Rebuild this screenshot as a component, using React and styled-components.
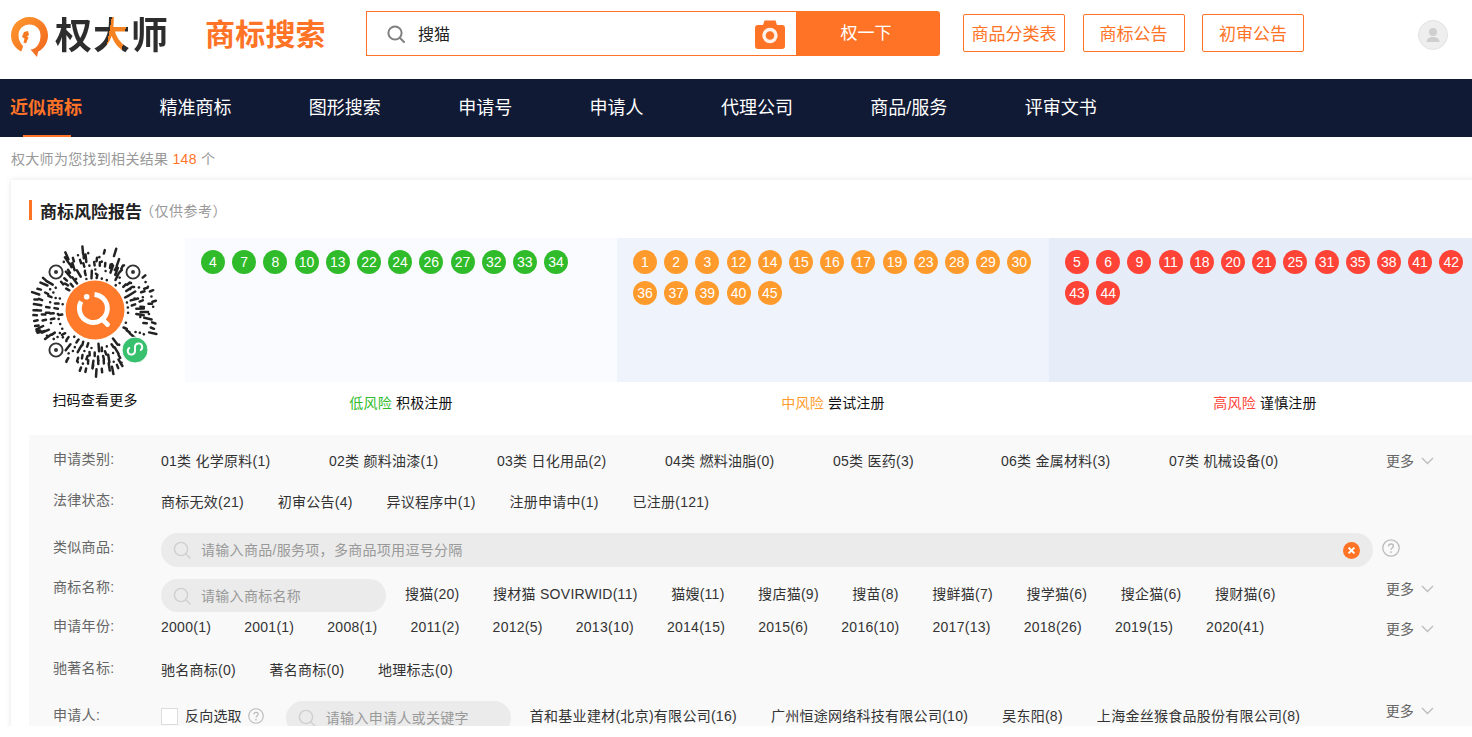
import React from "react";
import styled, { createGlobalStyle } from "styled-components";

const FONT = `"Liberation Sans", Arial, "Noto Sans CJK SC", sans-serif`;
const ORANGE = "#ff7326";

const Global = createGlobalStyle`
  html, body { margin: 0; padding: 0; background: #fff; overflow: hidden; }
  body { font-family: ${FONT}; }
  * { box-sizing: border-box; }
`;

const Page = styled.div`
  width: 1472px;
  height: 726px;
  overflow: hidden;
  background: #fff;
`;
const Header = styled.header`
  height: 79px;
  display: flex;
  align-items: flex-start;
`;
const Logo = styled.div`
  display: flex;
  align-items: center;
  width: 205px;
  height: 70px;
  padding: 3px 0 0 11px;
  gap: 7px;
`;
const LogoText = styled.span`
  font-size: 37px;
  font-weight: 700;
  letter-spacing: 1px;
  line-height: 40px;
  background: linear-gradient(100deg, #2d2d2d 0 47%, #f5821f 47% 60%, #2d2d2d 60%);
  -webkit-background-clip: text;
  background-clip: text;
  color: transparent;
`;
const Slogan = styled.h1`
  margin: 0;
  width: 161px;
  height: 70px;
  line-height: 70px;
  font-size: 30px;
  letter-spacing: 0.2px;
  font-weight: 700;
  color: ${ORANGE};
`;
const SearchBox = styled.div`
  margin-top: 11px;
  width: 430px;
  height: 45px;
  border: 1px solid ${ORANGE};
  border-right: 0;
  display: flex;
  align-items: center;
  padding-left: 20px;
`;
const SearchText = styled.span`
  margin-left: 13px;
  padding-bottom: 1px;
  flex: 1;
  font-size: 16px;
  color: #222;
`;
const CameraSlot = styled.span`
  display: flex;
  margin-right: 11px;
`;
const SearchButton = styled.button`
  margin-top: 11px;
  width: 144px;
  height: 45px;
  border: 0;
  border-radius: 0 3px 3px 0;
  background: ${ORANGE};
  color: #fff;
  font: 17px ${FONT};
  padding: 0 4px 4px 0;
`;
const LinkGroup = styled.div`
  margin: 14px 0 0 23px;
  display: flex;
  gap: 17.5px;
`;
const LinkButton = styled.a`
  width: 102px;
  height: 38px;
  padding-bottom: 2px;
  border: 1px solid ${ORANGE};
  border-radius: 2px;
  color: ${ORANGE};
  font-size: 17px;
  display: flex;
  align-items: center;
  justify-content: center;
`;
const Avatar = styled.div`
  margin: 20px 0 0 114px;
  width: 30px;
  height: 30px;
  border-radius: 50%;
  background: #eeeeee;
  border: 1px solid #e2e2e2;
  display: flex;
  align-items: center;
  justify-content: center;
`;

const Nav = styled.nav`
  height: 58px;
  background: #111a35;
  display: flex;
  gap: 77.4px;
  padding-left: 10px;
`;
const NavItem = styled.a`
  position: relative;
  font-size: 18px;
  line-height: 58px;
  color: ${(p) => (p.$active ? ORANGE : "#fff")};
  font-weight: ${(p) => (p.$active ? 700 : 400)};
  &::after {
    content: "";
    display: ${(p) => (p.$active ? "block" : "none")};
    position: absolute;
    left: 13px;
    right: 11px;
    bottom: 0;
    height: 2px;
    background: ${ORANGE};
  }
`;
const ResultLine = styled.div`
  height: 43px;
  padding: 13px 0 0 11px;
  font-size: 14px;
  letter-spacing: 0.3px;
  line-height: 18px;
  color: #999;
`;
const Count = styled.span`
  color: ${ORANGE};
`;

const Card = styled.section`
  margin-left: 11px;
  width: 1490px;
  height: 560px;
  padding: 20px 0 0 18px;
  background: #fff;
  box-shadow: 0 0 6px rgba(0, 0, 0, 0.1);
`;
const TitleRow = styled.div`
  height: 20px;
  display: flex;
  align-items: center;
  border-left: 3px solid ${ORANGE};
  padding-left: 8px;
  margin-bottom: 18px;
`;
const Title = styled.h2`
  margin: 0;
  font-size: 17px;
  font-weight: 700;
  color: #222;
`;
const TitleNote = styled.span`
  font-size: 14px;
  letter-spacing: 0.5px;
  color: #999;
  margin-left: -2px;
`;

const Report = styled.div`
  display: flex;
`;
const QrColumn = styled.div`
  width: 156px;
  display: flex;
  flex-direction: column;
`;
const QrFigure = styled.svg`
  margin: 3px 0 0 -4px;
`;
const QrCaption = styled.div`
  margin-top: 9px;
  width: 132px;
  text-align: center;
  font-size: 14px;
  letter-spacing: 0.2px;
  line-height: 20px;
  color: #111;
`;
const RiskColumn = styled.div`
  width: 432px;
`;
const RiskZone = styled.div`
  height: 144px;
  padding: 12px 0 0 16px;
  background: ${(p) => p.$bg};
  display: flex;
  flex-wrap: wrap;
  align-content: flex-start;
  gap: 7px 7.2px;
`;
const Badge = styled.span`
  width: 24px;
  height: 24px;
  border-radius: 50%;
  background: ${(p) => p.$color};
  color: #fff;
  font-size: 14px;
  line-height: 24px;
  text-align: center;
`;
const RiskCaption = styled.div`
  height: 42px;
  line-height: 42px;
  text-align: center;
  font-size: 14px;
  letter-spacing: 0.2px;
  color: #111;
`;
const RiskWord = styled.span`
  color: ${(p) => p.$color};
`;

const Panel = styled.div`
  margin-top: 11px;
  background: #f9f9f9;
  height: 300px;
`;
const Row = styled.div`
  height: ${(p) => p.$h}px;
  display: flex;
  align-items: flex-start;
  padding-left: 24px;
`;
const Label = styled.div`
  flex: 0 0 108px;
  margin-top: ${(p) => p.$top}px;
  font-size: 14px;
  letter-spacing: 0.3px;
  line-height: 20px;
  color: #666;
`;
const Items = styled.div`
  flex: 0 0 auto;
  width: ${(p) => p.$w || 1225}px;
  margin: ${(p) => p.$top}px 0 0 ${(p) => p.$left || 0}px;
  display: flex;
  gap: ${(p) => p.$gap || 33}px;
  white-space: nowrap;
`;
const GridItems = styled.div`
  flex: 0 0 1225px;
  margin-top: ${(p) => p.$top}px;
  display: grid;
  grid-template-columns: repeat(7, 168px);
  white-space: nowrap;
`;
const Item = styled.a`
  font-size: 14px;
  letter-spacing: 0.27px;
  line-height: 20px;
  color: #333;
`;
const More = styled.a`
  margin-top: ${(p) => p.$top}px;
  display: flex;
  align-items: center;
  gap: 7px;
  font-size: 14px;
  line-height: 20px;
  color: #666;
`;
const Pill = styled.div`
  flex: 0 0 auto;
  width: ${(p) => p.$w}px;
  height: ${(p) => p.$hh || 34}px;
  margin-top: ${(p) => p.$top}px;
  border-radius: 17px;
  background: #ebebeb;
  display: flex;
  align-items: center;
  padding: 0 13px 0 12px;
  font-size: 14px;
  color: #999;
`;
const PillText = styled.span`
  flex: 1;
  margin-left: 10px;
  padding-bottom: 2px;
  letter-spacing: 0.3px;
`;
const HelpSlot = styled.span`
  display: flex;
  margin: ${(p) => p.$m};
`;
const Inline = styled.div`
  flex: 0 0 auto;
  display: flex;
  align-items: flex-start;
`;
const Checkbox = styled.span`
  width: 17px;
  height: 17px;
  margin-top: 17px;
  border: 1px solid #ddd;
  background: #fff;
`;
const CheckLabel = styled.span`
  margin: 15px 0 0 7px;
  font-size: 14px;
  letter-spacing: 0.2px;
  line-height: 20px;
  color: #333;
`;

const SearchIcon = ({ size = 18, color = "#808080", w = 2 }) => (
  <svg width={size} height={size} viewBox="0 0 18 18" fill="none">
    <circle cx="8" cy="8" r="6.6" stroke={color} strokeWidth={w} />
    <path d="M13 13l4 4" stroke={color} strokeWidth={w} strokeLinecap="round" />
  </svg>
);
const Chevron = () => (
  <svg width="13" height="8" viewBox="0 0 13 8" fill="none">
    <path d="M1 1l5.5 5.5L12 1" stroke="#bdbdbd" strokeWidth="1.4" />
  </svg>
);
const Help = ({ size = 18, color = "#bbb" }) => (
  <svg width={size} height={size} viewBox="0 0 18 18" fill="none">
    <circle cx="9" cy="9" r="8.2" stroke={color} strokeWidth="1.3" />
    <path d="M6.6 7.2C6.6 5.8 7.7 5 9 5s2.4.8 2.4 2.1c0 1.8-2.4 1.9-2.4 3.7" stroke={color} strokeWidth="1.4" />
    <circle cx="9" cy="13.1" r=".95" fill={color} />
  </svg>
);
const Clear = () => (
  <svg width="17" height="17" viewBox="0 0 17 17">
    <circle cx="8.5" cy="8.5" r="8.5" fill={ORANGE} />
    <path d="M5.6 5.6l5.8 5.8M11.4 5.6l-5.8 5.8" stroke="#fff" strokeWidth="2" />
  </svg>
);
const Camera = () => (
  <svg width="30" height="30" viewBox="0 0 30 30">
    <path d="M3 6h5l1.5-4.5h11L22 6h5a3 3 0 0 1 3 3v18a3 3 0 0 1-3 3H3a3 3 0 0 1-3-3V9a3 3 0 0 1 3-3z" fill={ORANGE} />
    <circle cx="15" cy="16.5" r="6" fill="none" stroke="#fff" strokeWidth="3.4" opacity=".9" />
  </svg>
);
const LogoMark = () => (
  <svg width="37" height="40" viewBox="0 0 37 40">
    <defs>
      <linearGradient id="lg" x1="0" y1="0" x2="1" y2="1">
        <stop offset="0" stopColor="#ff9a2e" />
        <stop offset="1" stopColor="#f0641e" />
      </linearGradient>
    </defs>
    <path
      fillRule="evenodd"
      d="M18.5 0C28.7 0 37 8.2 37 18.4c0 7-4 13.1-9.8 16.2L26 40l-6.5-7.5 2-.3c4.600-1.3 8-6.9 8-13.8 0-6.8-5-10.9-11-10.9S7.500 11.600 7.500 18.400c0 4.600 2 8 4.700 10.800l-1.900 5.300C4.200 31.500 0 25.400 0 18.400 0 8.200 8.300 0 18.500 0z"
      fill="url(#lg)"
    />
    <path d="M13 15l4-1 1 4-2 1.500 1.500 1-2.500 6-2.500-1 1-4-2.500-1.500z" fill="#f57a22" />
  </svg>
);
const Person = () => (
  <svg width="18" height="18" viewBox="0 0 18 18">
    <circle cx="9" cy="6" r="4" fill="#cfcfcf" />
    <path d="M2.500 16c0-3.500 3-5 6.500-5s6.500 1.500 6.500 5z" fill="#cfcfcf" />
  </svg>
);

function buildQr() {
  let s = 20210;
  const rand = () => {
    s = (s * 16807) % 2147483647;
    return s / 2147483647;
  };
  const cx = 70, cy = 70;
  const finders = [[31, 31], [108, 31], [31, 109]];
  const out = [];
  for (let r = 33; r <= 59; r += 4.2) {
    const count = Math.round((2 * Math.PI * r) / 5.2);
    const start = rand() * 6.28;
    for (let i = 0; i < count; i++) {
      const a = start + (i / count) * 2 * Math.PI;
      const x = cx + r * Math.cos(a);
      const y = cy + r * Math.sin(a);
      if (finders.some(([fx, fy]) => Math.hypot(x - fx, y - fy) < 11)) continue;
      if (Math.hypot(x - 110, y - 109) < 15) continue;
      if (rand() < 0.34) continue;
      const v = rand();
      const len = v < 0.4 ? 0.1 : v < 0.78 ? 3.5 : 7.5;
      const skew = (rand() - 0.5) * 0.4;
      const dx = Math.cos(a + skew) * len;
      const dy = Math.sin(a + skew) * len;
      out.push(`M${x.toFixed(1)} ${y.toFixed(1)}l${dx.toFixed(1)} ${dy.toFixed(1)}`);
    }
  }
  return { d: out.join(""), finders };
}
const QR = buildQr();
const QrCode = () => (
  <QrFigure width="140" height="140" viewBox="0 0 140 140">
    <path d={QR.d} stroke="#222" strokeWidth="2.5" strokeLinecap="round" fill="none" />
    {QR.finders.map(([x, y]) => (
      <g key={x + "-" + y}>
        <circle cx={x} cy={y} r="6.6" fill="none" stroke="#333" strokeWidth="1.9" />
        <circle cx={x} cy={y} r="2" fill="#333" />
      </g>
    ))}
    <circle cx="70" cy="69" r="29.500" fill="#ff7a2a" />
    <path d="M69.500 53.500A14 14 0 1 1 56.200 60.500" fill="none" stroke="#fff" strokeWidth="4.800" />
    <circle cx="61.700" cy="55.700" r="2.800" fill="#fff" />
    <path d="M77 78l5.500 5.500" stroke="#fff" strokeWidth="4.800" strokeLinecap="round" />
    <circle cx="110" cy="109" r="13" fill="#37c06d" stroke="#fff" strokeWidth="1" />
    <path d="M104.900 105.700a3.600 3.600 0 1 0 5.100 3.300v-4a3.600 3.600 0 1 1 5.100 3.300" transform="translate(0 1)" fill="none" stroke="#fff" strokeWidth="1.900" />
  </QrFigure>
);

const NAV = ["近似商标", "精准商标", "图形搜索", "申请号", "申请人", "代理公司", "商品/服务", "评审文书"];
const RISKS = [
  { bg: "#f9fbfe", color: "#2fbb2a", word: "低风险", note: "积极注册", tone: "#2fbb2a",
    nums: [4, 7, 8, 10, 13, 22, 24, 26, 27, 32, 33, 34] },
  { bg: "#eff4fc", color: "#ff9b2c", word: "中风险", note: "尝试注册", tone: "#ff9b2c",
    nums: [1, 2, 3, 12, 14, 15, 16, 17, 19, 23, 28, 29, 30, 36, 37, 39, 40, 45] },
  { bg: "#e6edf8", color: "#ff4336", word: "高风险", note: "谨慎注册", tone: "#ff4336",
    nums: [5, 6, 9, 11, 18, 20, 21, 25, 31, 35, 38, 41, 42, 43, 44] },
];
const CLASSES = ["01类 化学原料(1)", "02类 颜料油漆(1)", "03类 日化用品(2)", "04类 燃料油脂(0)", "05类 医药(3)", "06类 金属材料(3)", "07类 机械设备(0)"];
const STATUS = ["商标无效(21)", "初审公告(4)", "异议程序中(1)", "注册申请中(1)", "已注册(121)"];
const NAMES = ["搜猫(20)", "搜材猫 SOVIRWID(11)", "猫嫂(11)", "搜店猫(9)", "搜苗(8)", "搜鲜猫(7)", "搜学猫(6)", "搜企猫(6)", "搜财猫(6)"];
const YEARS = ["2000(1)", "2001(1)", "2008(1)", "2011(2)", "2012(5)", "2013(10)", "2014(15)", "2015(6)", "2016(10)", "2017(13)", "2018(26)", "2019(15)", "2020(41)"];
const FAME = ["驰名商标(0)", "著名商标(0)", "地理标志(0)"];
const OWNERS = ["首和基业建材(北京)有限公司(16)", "广州恒途网络科技有限公司(10)", "吴东阳(8)", "上海金丝猴食品股份有限公司(8)"];

const MoreLink = ({ top }) => (
  <More $top={top}>
    更多 <Chevron />
  </More>
);
const list = (arr) => arr.map((t) => <Item key={t}>{t}</Item>);

export default function App() {
  return (
    <Page>
      <Global />
      <Header>
        <Logo>
          <LogoMark />
          <LogoText>权大师</LogoText>
        </Logo>
        <Slogan>商标搜索</Slogan>
        <SearchBox>
          <SearchIcon />
          <SearchText>搜猫</SearchText>
          <CameraSlot>
            <Camera />
          </CameraSlot>
        </SearchBox>
        <SearchButton>权一下</SearchButton>
        <LinkGroup>
          <LinkButton>商品分类表</LinkButton>
          <LinkButton>商标公告</LinkButton>
          <LinkButton>初审公告</LinkButton>
        </LinkGroup>
        <Avatar>
          <Person />
        </Avatar>
      </Header>
      <Nav>
        {NAV.map((n, i) => (
          <NavItem key={n} $active={i === 0}>
            {n}
          </NavItem>
        ))}
      </Nav>
      <ResultLine>
        权大师为您找到相关结果 <Count>148</Count> 个
      </ResultLine>
      <Card>
        <TitleRow>
          <Title>商标风险报告</Title>
          <TitleNote>（仅供参考）</TitleNote>
        </TitleRow>
        <Report>
          <QrColumn>
            <QrCode />
            <QrCaption>扫码查看更多</QrCaption>
          </QrColumn>
          {RISKS.map((r) => (
            <RiskColumn key={r.word}>
              <RiskZone $bg={r.bg}>
                {r.nums.map((n) => (
                  <Badge key={n} $color={r.color}>
                    {n}
                  </Badge>
                ))}
              </RiskZone>
              <RiskCaption>
                <RiskWord $color={r.tone}>{r.word}</RiskWord> {r.note}
              </RiskCaption>
            </RiskColumn>
          ))}
        </Report>
        <Panel>
          <Row $h={46}>
            <Label $top={14}>申请类别:</Label>
            <GridItems $top={16}>{list(CLASSES)}</GridItems>
            <MoreLink top={16} />
          </Row>
          <Row $h={41}>
            <Label $top={9}>法律状态:</Label>
            <Items $top={11} $gap={33.7}>{list(STATUS)}</Items>
          </Row>
          <Row $h={53}>
            <Label $top={15}>类似商品:</Label>
            <Pill $w={1212} $top={11}>
              <SearchIcon color="#cfcfcf" w={1.4} />
              <PillText>请输入商品/服务项，多商品项用逗号分隔</PillText>
              <Clear />
            </Pill>
            <HelpSlot $m="17px 0 0 9px">
              <Help />
            </HelpSlot>
          </Row>
          <Row $h={37}>
            <Label $top={2}>商标名称:</Label>
            <Pill $w={225} $top={4} $hh={33}>
              <SearchIcon color="#cfcfcf" w={1.4} />
              <PillText>请输入商标名称</PillText>
            </Pill>
            <Items $w={981} $left={19} $top={9} $gap={33.5}>
              {list(NAMES)}
            </Items>
            <MoreLink top={4} />
          </Row>
          <Row $h={36}>
            <Label $top={4}>申请年份:</Label>
            <Items $top={5}>{list(YEARS)}</Items>
            <MoreLink top={7} />
          </Row>
          <Row $h={43}>
            <Label $top={10}>驰著名标:</Label>
            <Items $top={12} $gap={33.5}>{list(FAME)}</Items>
          </Row>
          <Row $h={50}>
            <Label $top={14}>申请人:</Label>
            <Inline>
              <Checkbox />
              <CheckLabel>反向选取</CheckLabel>
              <HelpSlot $m="17px 22px 0 6px">
                <Help size={16} />
              </HelpSlot>
              <Pill $w={225} $top={10}>
                <SearchIcon color="#cfcfcf" w={1.4} />
                <PillText>请输入申请人或关键字</PillText>
              </Pill>
            </Inline>
            <Items $w={856} $left={19} $top={15} $gap={34}>
              {list(OWNERS)}
            </Items>
            <MoreLink top={10} />
          </Row>
        </Panel>
      </Card>
    </Page>
  );
}
